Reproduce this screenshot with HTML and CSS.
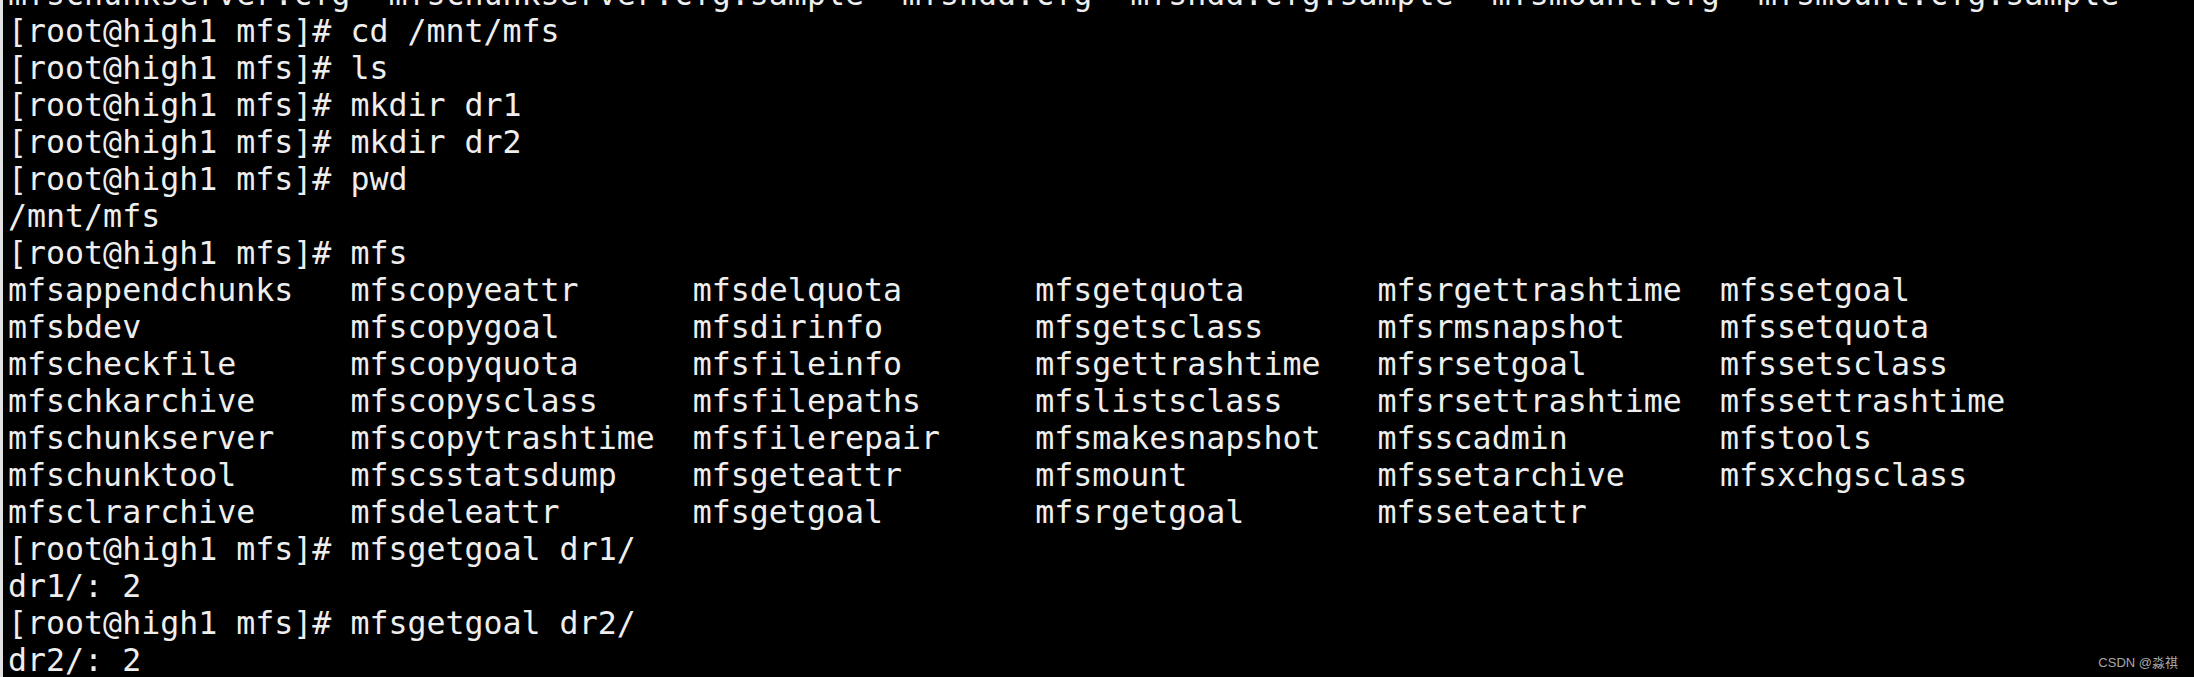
FILE: index.html
```html
<!DOCTYPE html>
<html lang="zh">
<head>
<meta charset="utf-8">
<title>terminal</title>
<link rel="stylesheet" href="styles.css">
</head>
<body>
<div class="term">
<div class="screen">
<div class="line">mfschunkserver.cfg  mfschunkserver.cfg.sample  mfshdd.cfg  mfshdd.cfg.sample  mfsmount.cfg  mfsmount.cfg.sample</div>
<div class="line">[root@high1 mfs]# cd /mnt/mfs</div>
<div class="line">[root@high1 mfs]# ls</div>
<div class="line">[root@high1 mfs]# mkdir dr1</div>
<div class="line">[root@high1 mfs]# mkdir dr2</div>
<div class="line">[root@high1 mfs]# pwd</div>
<div class="line">/mnt/mfs</div>
<div class="line">[root@high1 mfs]# mfs</div>
<div class="listing">
<span>mfsappendchunks</span><span>mfscopyeattr</span><span>mfsdelquota</span><span>mfsgetquota</span><span>mfsrgettrashtime</span><span>mfssetgoal</span>
<span>mfsbdev</span><span>mfscopygoal</span><span>mfsdirinfo</span><span>mfsgetsclass</span><span>mfsrmsnapshot</span><span>mfssetquota</span>
<span>mfscheckfile</span><span>mfscopyquota</span><span>mfsfileinfo</span><span>mfsgettrashtime</span><span>mfsrsetgoal</span><span>mfssetsclass</span>
<span>mfschkarchive</span><span>mfscopysclass</span><span>mfsfilepaths</span><span>mfslistsclass</span><span>mfsrsettrashtime</span><span>mfssettrashtime</span>
<span>mfschunkserver</span><span>mfscopytrashtime</span><span>mfsfilerepair</span><span>mfsmakesnapshot</span><span>mfsscadmin</span><span>mfstools</span>
<span>mfschunktool</span><span>mfscsstatsdump</span><span>mfsgeteattr</span><span>mfsmount</span><span>mfssetarchive</span><span>mfsxchgsclass</span>
<span>mfsclrarchive</span><span>mfsdeleattr</span><span>mfsgetgoal</span><span>mfsrgetgoal</span><span>mfsseteattr</span><span></span>
</div>
<div class="line">[root@high1 mfs]# mfsgetgoal dr1/</div>
<div class="line">dr1/: 2</div>
<div class="line">[root@high1 mfs]# mfsgetgoal dr2/</div>
<div class="line">dr2/: 2</div>
</div>
<div class="watermark">CSDN @淼祺</div>
</div>
</body>
</html>
```

FILE: styles.css
```css
html, body {
  margin: 0;
  padding: 0;
  background: #000;
  width: 2194px;
  height: 677px;
  overflow: hidden;
}

.term {
  position: relative;
  width: 2194px;
  height: 677px;
  box-sizing: border-box;
  border-left: 3px solid #e2e2e2;
  background: #000;
  overflow: hidden;
}

.screen {
  margin-top: -24px;
  padding-left: 5px;
  font-family: "DejaVu Sans Mono", monospace;
  font-size: 31.6px;
  line-height: 37px;
  color: #eeeeee;
}

.line {
  height: 37px;
  white-space: pre;
}

.listing {
  display: grid;
  grid-template-columns: repeat(6, 18ch);
  grid-auto-rows: 37px;
}

.listing span {
  white-space: pre;
}

.watermark {
  position: absolute;
  right: 16px;
  bottom: 6px;
  font-family: "Liberation Sans", "Noto Sans CJK SC", sans-serif;
  font-size: 13px;
  color: #a8a8a8;
}
```
